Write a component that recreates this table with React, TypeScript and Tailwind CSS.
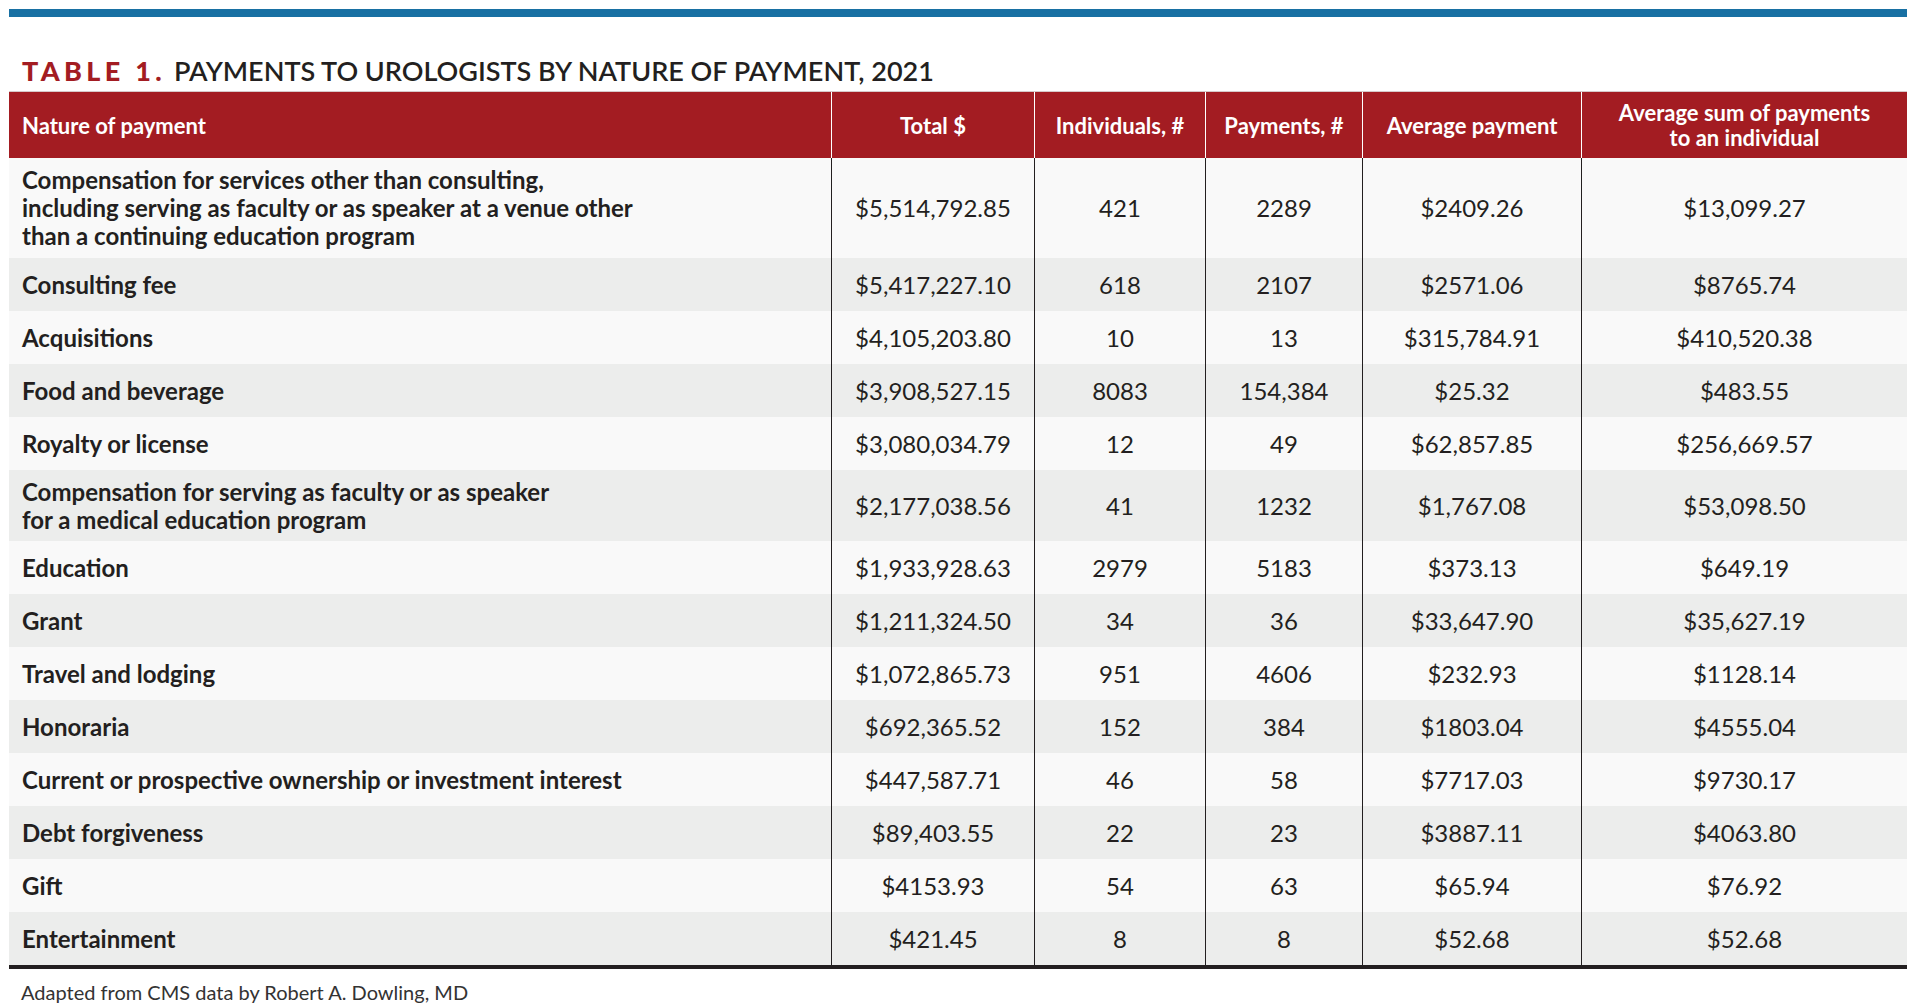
// Table 1 — payments to urologists by nature of payment (2021).
// Fixed-width grid so the column rules line up with the printed table.

type Row = {
  label: string;
  total: string;
  individuals: string;
  payments: string;
  average: string;
  averageSum: string;
  height: string;
};

const rows: Row[] = [
  {
    label:
      'Compensation for services other than consulting,\nincluding serving as faculty or as speaker at a venue other\nthan a continuing education program',
    total: '$5,514,792.85',
    individuals: '421',
    payments: '2289',
    average: '$2409.26',
    averageSum: '$13,099.27',
    height: 'h-[100px]',
  },
  { label: 'Consulting fee', total: '$5,417,227.10', individuals: '618', payments: '2107', average: '$2571.06', averageSum: '$8765.74', height: 'h-[53px]' },
  { label: 'Acquisitions', total: '$4,105,203.80', individuals: '10', payments: '13', average: '$315,784.91', averageSum: '$410,520.38', height: 'h-[53px]' },
  { label: 'Food and beverage', total: '$3,908,527.15', individuals: '8083', payments: '154,384', average: '$25.32', averageSum: '$483.55', height: 'h-[53px]' },
  { label: 'Royalty or license', total: '$3,080,034.79', individuals: '12', payments: '49', average: '$62,857.85', averageSum: '$256,669.57', height: 'h-[53px]' },
  {
    label: 'Compensation for serving as faculty or as speaker\nfor a medical education program',
    total: '$2,177,038.56',
    individuals: '41',
    payments: '1232',
    average: '$1,767.08',
    averageSum: '$53,098.50',
    height: 'h-[71px]',
  },
  { label: 'Education', total: '$1,933,928.63', individuals: '2979', payments: '5183', average: '$373.13', averageSum: '$649.19', height: 'h-[53px]' },
  { label: 'Grant', total: '$1,211,324.50', individuals: '34', payments: '36', average: '$33,647.90', averageSum: '$35,627.19', height: 'h-[53px]' },
  { label: 'Travel and lodging', total: '$1,072,865.73', individuals: '951', payments: '4606', average: '$232.93', averageSum: '$1128.14', height: 'h-[53px]' },
  { label: 'Honoraria', total: '$692,365.52', individuals: '152', payments: '384', average: '$1803.04', averageSum: '$4555.04', height: 'h-[53px]' },
  { label: 'Current or prospective ownership or investment interest', total: '$447,587.71', individuals: '46', payments: '58', average: '$7717.03', averageSum: '$9730.17', height: 'h-[53px]' },
  { label: 'Debt forgiveness', total: '$89,403.55', individuals: '22', payments: '23', average: '$3887.11', averageSum: '$4063.80', height: 'h-[53px]' },
  { label: 'Gift', total: '$4153.93', individuals: '54', payments: '63', average: '$65.94', averageSum: '$76.92', height: 'h-[53px]' },
  { label: 'Entertainment', total: '$421.45', individuals: '8', payments: '8', average: '$52.68', averageSum: '$52.68', height: 'h-[53px]' },
];

const grid = 'grid grid-cols-[822px_203px_171px_157px_219px_326px]';

function HeaderCell({ children }: { children: React.ReactNode }) {
  return (
    <div className="flex items-center justify-center border-l border-white text-center">{children}</div>
  );
}

function NumCell({ value }: { value: string }) {
  return <div className="flex items-center justify-center border-l border-[#231f20]">{value}</div>;
}

export default function App() {
  return (
    <div className="h-[1008px] w-[1918px] overflow-hidden bg-white font-['Lato',sans-serif] text-[#231f20]">
      <div className="ml-[9px] w-[1898px]">
        <div className="mt-[9px] h-[8px] bg-[#1870a3]" />

        <h1 className="mt-[38px] flex items-baseline pl-[13px] text-[27px] leading-[32px]">
          <span className="font-black tracking-[0.16em] text-[#a31c22]">TABLE 1.</span>
          <span className="ml-[8px] font-semibold">PAYMENTS TO UROLOGISTS BY NATURE OF PAYMENT, 2021</span>
        </h1>

        <div className="mt-[4px] border-t border-[#d6c9c9]">
          <div className={`${grid} h-[66px] bg-[#a31c22] text-[22px] font-bold leading-[25px] text-white`}>
            <div className="flex items-center pl-[13px]">Nature of payment</div>
            <HeaderCell>Total $</HeaderCell>
            <HeaderCell>Individuals, #</HeaderCell>
            <HeaderCell>Payments, #</HeaderCell>
            <HeaderCell>Average payment</HeaderCell>
            <HeaderCell>
              Average sum of payments
              <br />
              to an individual
            </HeaderCell>
          </div>

          <div className="border-b-4 border-[#231f20] text-[24px]">
            {rows.map((row, i) => (
              <div
                key={row.label}
                className={`${grid} ${row.height} ${i % 2 === 0 ? 'bg-[#f9f9f9]' : 'bg-[#ecedec]'}`}
              >
                <div className="flex items-center whitespace-pre-line pl-[13px] font-bold leading-[28px]">
                  {row.label}
                </div>
                <NumCell value={row.total} />
                <NumCell value={row.individuals} />
                <NumCell value={row.payments} />
                <NumCell value={row.average} />
                <NumCell value={row.averageSum} />
              </div>
            ))}
          </div>
        </div>

        <p className="mt-[11px] pl-[12px] text-[20px] font-normal leading-[24px] text-[#333]">
          Adapted from CMS data by Robert A. Dowling, MD
        </p>
      </div>
    </div>
  );
}
